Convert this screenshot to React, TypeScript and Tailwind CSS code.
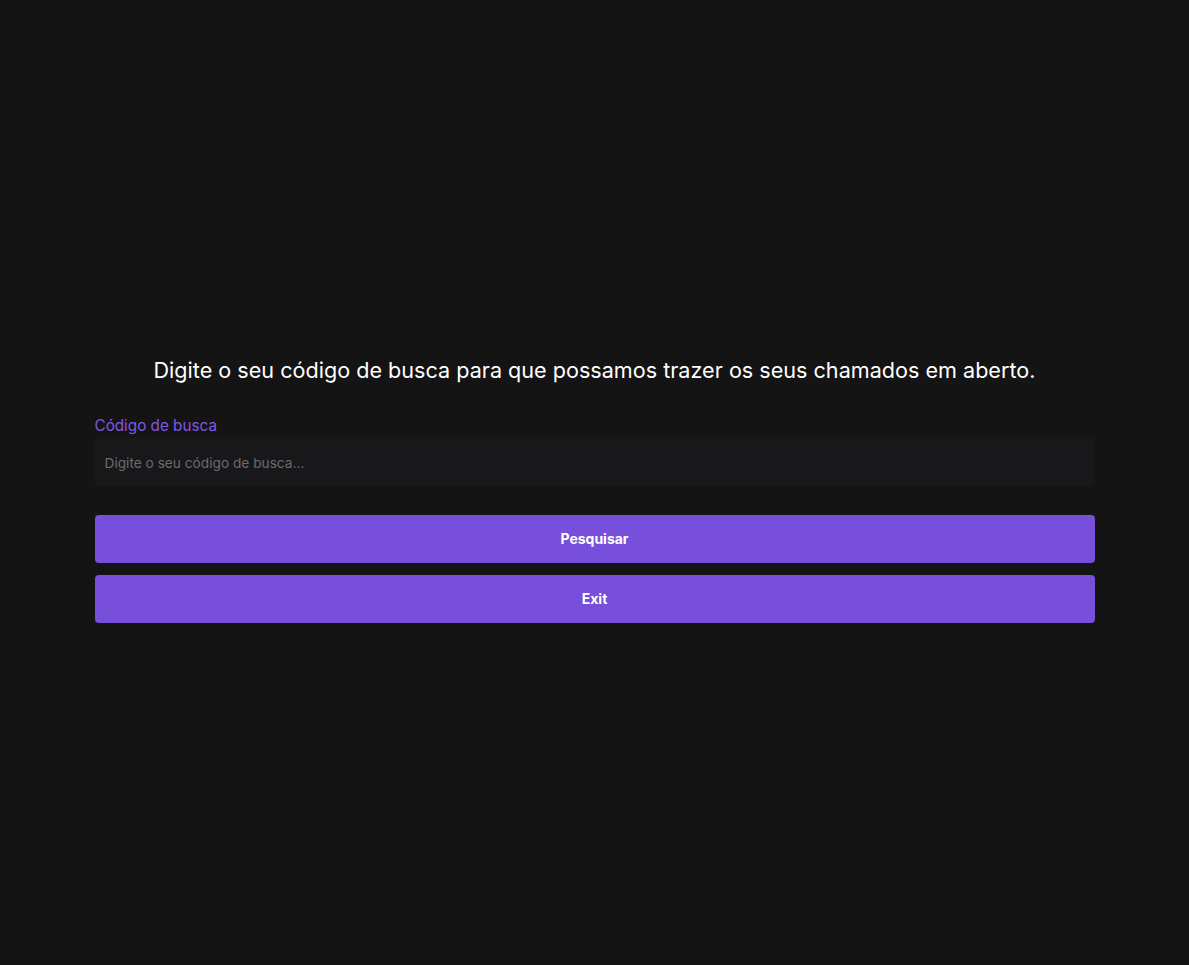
export default function App() {
  return (
    <div className="min-h-screen w-full bg-[#141414] flex items-center justify-center font-['Inter',Roboto,sans-serif]">
      <div className="mt-[7px] w-[1000px] flex flex-col">
        <h1 className="pt-[6px] text-center text-white text-[21.6px] leading-[28px] font-normal">
          Digite o seu código de busca para que possamos trazer os seus chamados em aberto.
        </h1>
        <label className="mt-[32px] text-[#8257e5] text-[15.25px] leading-[20px]">
          Código de busca
        </label>
        <input
          className="mt-[1px] h-[49px] w-full rounded-[4px] bg-[#18181b] px-[10px] pt-[3px] text-[13.7px] text-white placeholder:text-[#6b6b6f] outline-none"
          placeholder="Digite o seu código de busca..."
        />
        <button className="mt-[29px] h-[48px] w-full rounded-[4px] bg-[#774fdb] text-white text-[14px] font-bold">
          Pesquisar
        </button>
        <button className="mt-[12px] h-[48px] w-full rounded-[4px] bg-[#774fdb] text-white text-[14px] font-bold">
          Exit
        </button>
      </div>
    </div>
  );
}
